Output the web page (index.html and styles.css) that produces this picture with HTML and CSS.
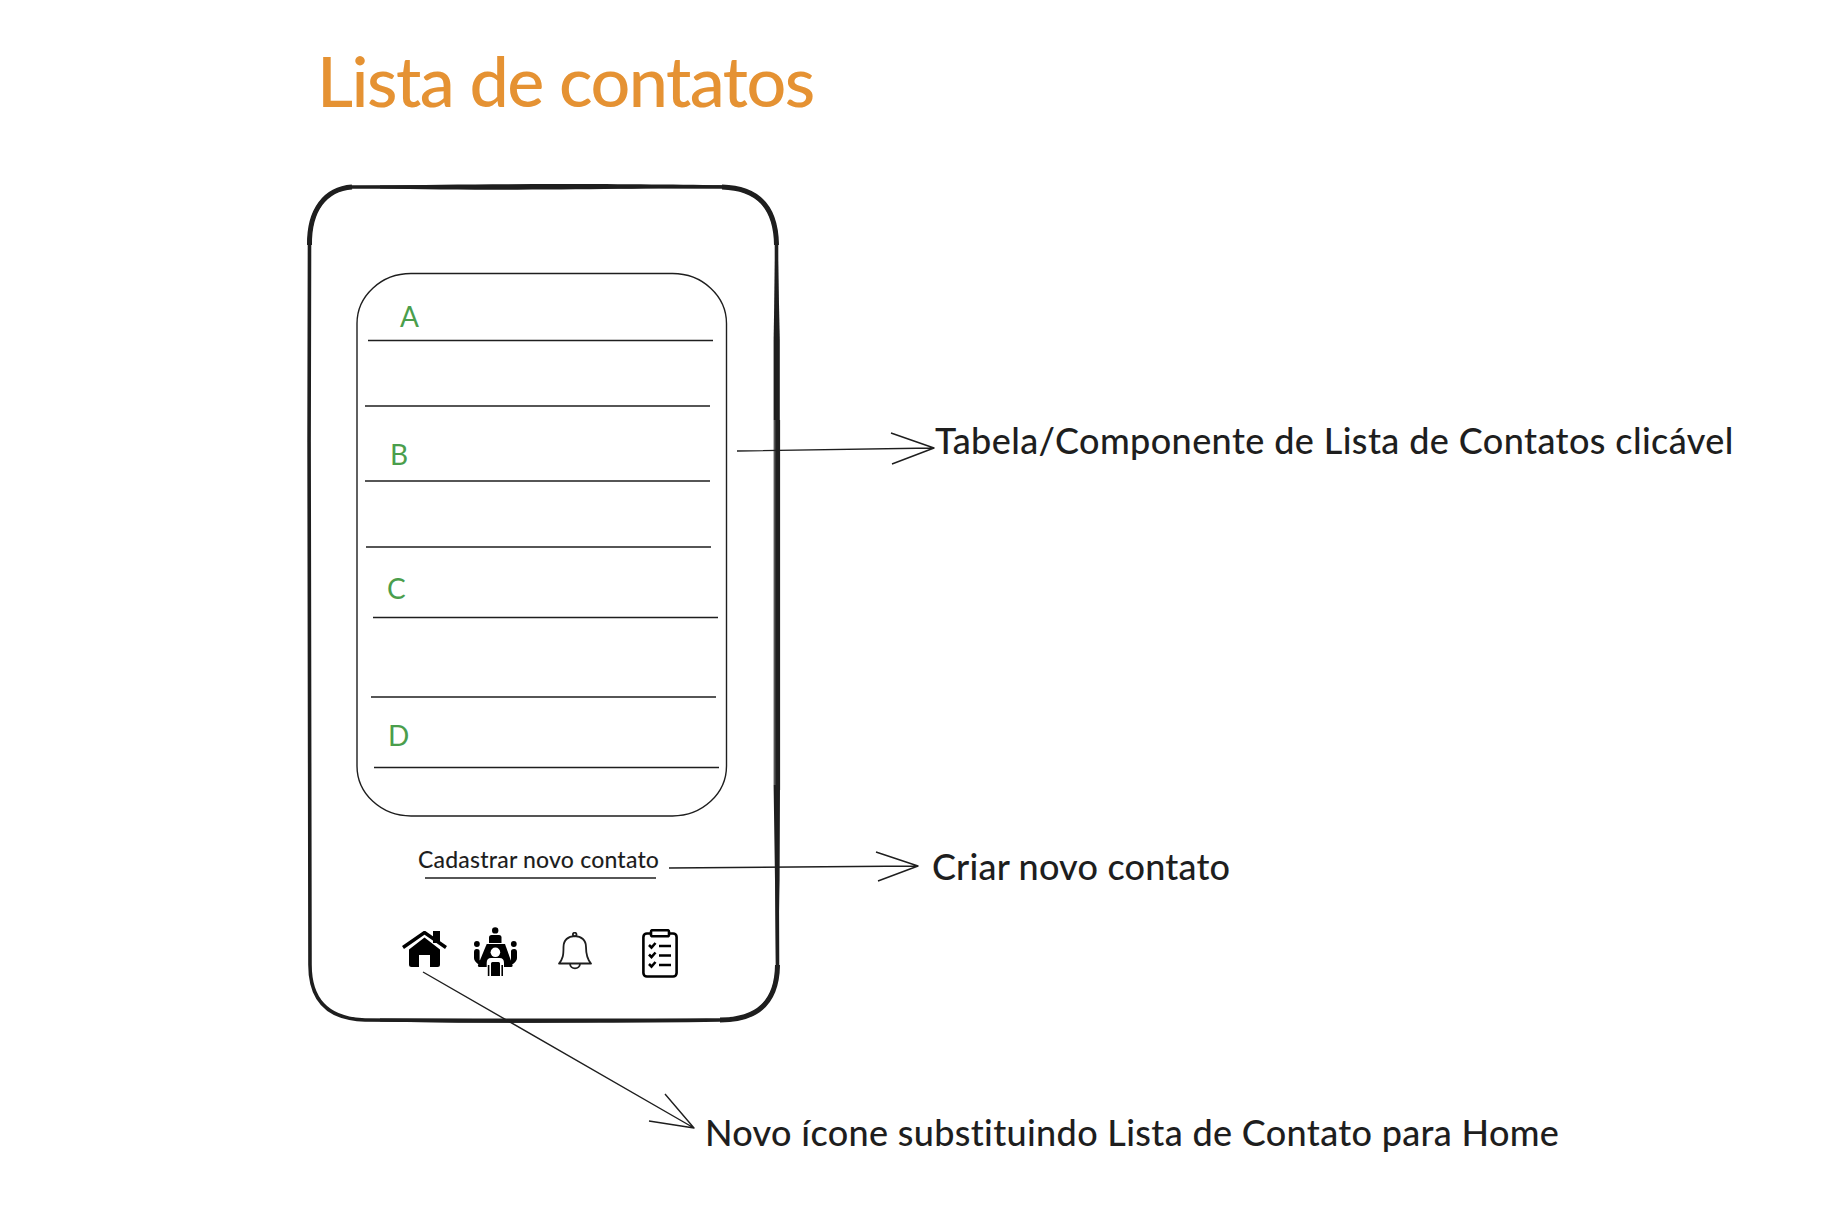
FILE: index.html
```html
<!DOCTYPE html>
<html lang="pt-BR">
<head>
    <meta charset="UTF-8">
    <title>Lista de contatos</title>
    <link rel="stylesheet" href="styles.css">
</head>
<body>
<div class="board">
    <h1 class="title">Lista de contatos</h1>

    <!-- phone frame, list box and arrows -->
    <svg class="sketch" width="1840" height="1206" viewBox="0 0 1840 1206" fill="none">
        <path class="heavy" d="M352 187 C500 186 600 187 722 187 C758 188 776 207 776.5 245 C777 400 776 700 777.5 965 C777 1002 758 1020 720 1020 C600 1022 480 1021 365 1020 C330 1019 310 1002 310 965 C311 800 308 500 309.5 245 C309 210 325 189 352 187 Z"/>
        <!-- places where the pen went over the frame twice -->
        <g class="overdraw">
            <path d="M380 185.6 C480 183.6 640 183.6 730 185.6 C640 190.4 480 190.4 380 188.4 Z"/>
            <path d="M775 260 L773.6 340 V420 H779.8 V340 L778 260 Z"/>
            <path d="M773.6 785 H780 L779.6 880 L778 965 H776 L775 880 Z"/>
            <path d="M380 1018.6 C480 1018.6 600 1018.6 720 1018.6 C600 1023.6 480 1023.6 380 1021.4 Z"/>
        </g>
        <g class="corner">
            <path d="M309.5 245 C309 210 325 189 352 187"/>
            <path d="M722 187 C758 188 776 207 776.5 245"/>
            <path d="M777.5 965 C777 1002 758 1020 720 1020"/>
        </g>
        <path class="second-line" d="M774.5 420 V785"/>
        <path class="second-dark" d="M778.6 420 V790"/>
        <rect class="box" x="357" y="273.5" width="369.5" height="542.5" rx="54" ry="50"/>
        <g class="rule">
            <path d="M368 340.5 H713"/>
            <path d="M365 406 H710"/>
            <path d="M365 481 H710"/>
            <path d="M366 547 H711"/>
            <path d="M373 617.5 H718"/>
            <path d="M371 697 H716"/>
            <path d="M374 767.5 H719"/>
            <path d="M425 878 H656"/>
        </g>
        <g class="arrow">
            <path d="M737 451 L934 448 M891 433 L934 448 L892 464"/>
            <path d="M669 868 L918 866 M876 852 L918 866 L878 881"/>
            <path d="M423 972 L694 1128 M665 1094 L694 1128 L649 1121"/>
        </g>
    </svg>

    <span class="letter letter-a">A</span>
    <span class="letter letter-b">B</span>
    <span class="letter letter-c">C</span>
    <span class="letter letter-d">D</span>

    <span class="new-contact">Cadastrar novo contato</span>

    <svg class="icon icon-home" width="45" height="36" viewBox="0 0 45 36">
        <path d="M31 0 H38 V12 H31 Z"/>
        <path d="M1 16.5 L22.5 1.5 L44 16.5" fill="none" stroke="#000" stroke-width="3.4"/>
        <path d="M22.5 6.5 L38 18.5 V33.5 Q38 36 35.5 36 H28 V24 H17 V36 H9.5 Q7 36 7 33.5 V18.5 Z"/>
    </svg>
    <svg class="icon icon-meeting" width="43" height="50" viewBox="0 0 43 50">
        <circle cx="21.2" cy="3.4" r="3.2"/>
        <path d="M15 16 V10.5 Q15 8 17.5 8 H25 Q27.5 8 27.5 10.5 V16 Z"/>
        <path d="M12.7 17 H31 L38.5 38 Q39 40 37 40 H5.5 Q3.5 40 4 38 Z"/>
        <circle cx="2.9" cy="17" r="2.9"/>
        <circle cx="39.8" cy="17" r="2.9"/>
        <path d="M0 25 Q0 22 2.8 22 Q6 22 5.6 25 V33 L8.5 38 L4 37 Q0 34 0 31 Z"/>
        <path d="M43 25 Q43 22 40.2 22 Q36.6 22 37 25 V33 L34 38 L39 37 Q43 34 43 31 Z"/>
        <circle cx="21.4" cy="25.3" r="4.8" fill="#fff"/>
        <path d="M12.7 49 V36 Q12.7 31 17 31 H25.5 Q30 31 30 36 V49 Z" fill="#fff"/>
        <path d="M13.8 49 V38 H15.4 V49 Z M27.4 49 V38 H29 V49 Z M17 49 V36.5 Q17 35 18.5 35 H24.5 Q26 35 26 36.5 V49 Z"/>
    </svg>
    <svg class="icon-line icon-bell" width="34" height="38" viewBox="0 0 34 38">
        <circle cx="16.7" cy="2.5" r="1.8"/>
        <path d="M1 31.5 C5 27 5.5 23 5.5 15 C5.5 8 10 4.2 16.7 4.2 C23.5 4.2 28 8 28 15 C28 23 29 27 33 31.5 Z"/>
        <path d="M12 31.5 C12 38 22 38 22 31.5"/>
    </svg>
    <svg class="icon-line icon-list" width="36" height="49" viewBox="0 0 36 49">
        <rect x="1.4" y="4.5" width="33.2" height="43" rx="3.5"/>
        <rect x="9" y="1.2" width="18" height="6" rx="1.5" class="clip"/>
        <path d="M7 16 L9.5 18.5 L13.5 14 M7 25.5 L9.5 28 L13.5 23.5 M7 35 L9.5 37.5 L13.5 33"/>
        <path d="M17 17 H29 M17 26.5 H29 M17 36 H29"/>
    </svg>

    <p class="note note-table">Tabela/Componente de Lista de Contatos clicável</p>
    <p class="note note-create">Criar novo contato</p>
    <p class="note note-icon">Novo ícone substituindo Lista de Contato para Home</p>
</div>
</body>
</html>
```

FILE: styles.css
```css
body {
    margin: 0;
    background-color: #ffffff;
    font-family: Lato, "Noto Sans", sans-serif;
    color: #1e1e1e;
}
.board {
    position: relative;
    width: 1840px;
    height: 1206px;
    overflow: hidden;
}
.title {
    position: absolute;
    left: 317px;
    top: 35px;
    margin: 0;
    font-size: 70px;
    line-height: 90px;
    font-weight: 500;
    letter-spacing: -1.5px;
    white-space: nowrap;
    color: #e59233;
}
.sketch {
    position: absolute;
    left: 0;
    top: 0;
}
.heavy {
    stroke: #1e1e1e;
    stroke-width: 3.6;
}
.overdraw path {
    fill: #1e1e1e;
}
.corner path {
    stroke: #1e1e1e;
    stroke-width: 5;
}
.second-line {
    stroke: #555555;
    stroke-width: 1.8;
}
.second-dark {
    stroke: #1e1e1e;
    stroke-width: 3;
}
.box {
    stroke: #1e1e1e;
    stroke-width: 1.4;
}
.rule path {
    stroke: #1e1e1e;
    stroke-width: 1.5;
}
.arrow path {
    stroke: #1e1e1e;
    stroke-width: 1.4;
    stroke-linejoin: round;
}
.letter {
    position: absolute;
    font-size: 28px;
    line-height: 36px;
    color: #4a9e4c;
}
.letter-a { left: 400px; top: 298px; }
.letter-b { left: 390px; top: 436px; }
.letter-c { left: 387px; top: 570px; }
.letter-d { left: 388px; top: 717px; }
.new-contact {
    position: absolute;
    left: 418px;
    top: 844px;
    font-size: 23px;
    line-height: 30px;
    font-weight: 500;
    letter-spacing: 0.2px;
    white-space: nowrap;
}
.icon {
    position: absolute;
    fill: #000000;
}
.icon-line {
    position: absolute;
    fill: none;
    stroke: #000000;
    stroke-width: 2.6;
}
.icon-line .clip {
    fill: #ffffff;
}
.icon-home { left: 402px; top: 931px; }
.icon-meeting { left: 474px; top: 927px; }
.icon-bell { left: 558px; top: 932px; stroke: #1e1e1e; stroke-width: 1.8; stroke-linejoin: round; }
.icon-list { left: 642px; top: 929px; }
.note {
    position: absolute;
    margin: 0;
    font-size: 36px;
    line-height: 46px;
    font-weight: 500;
    letter-spacing: 0.4px;
    white-space: nowrap;
}
.note-table { left: 935px; top: 417px; }
.note-create { left: 932px; top: 843px; letter-spacing: 0.2px; }
.note-icon { left: 705px; top: 1109px; letter-spacing: 0.33px; }
```
